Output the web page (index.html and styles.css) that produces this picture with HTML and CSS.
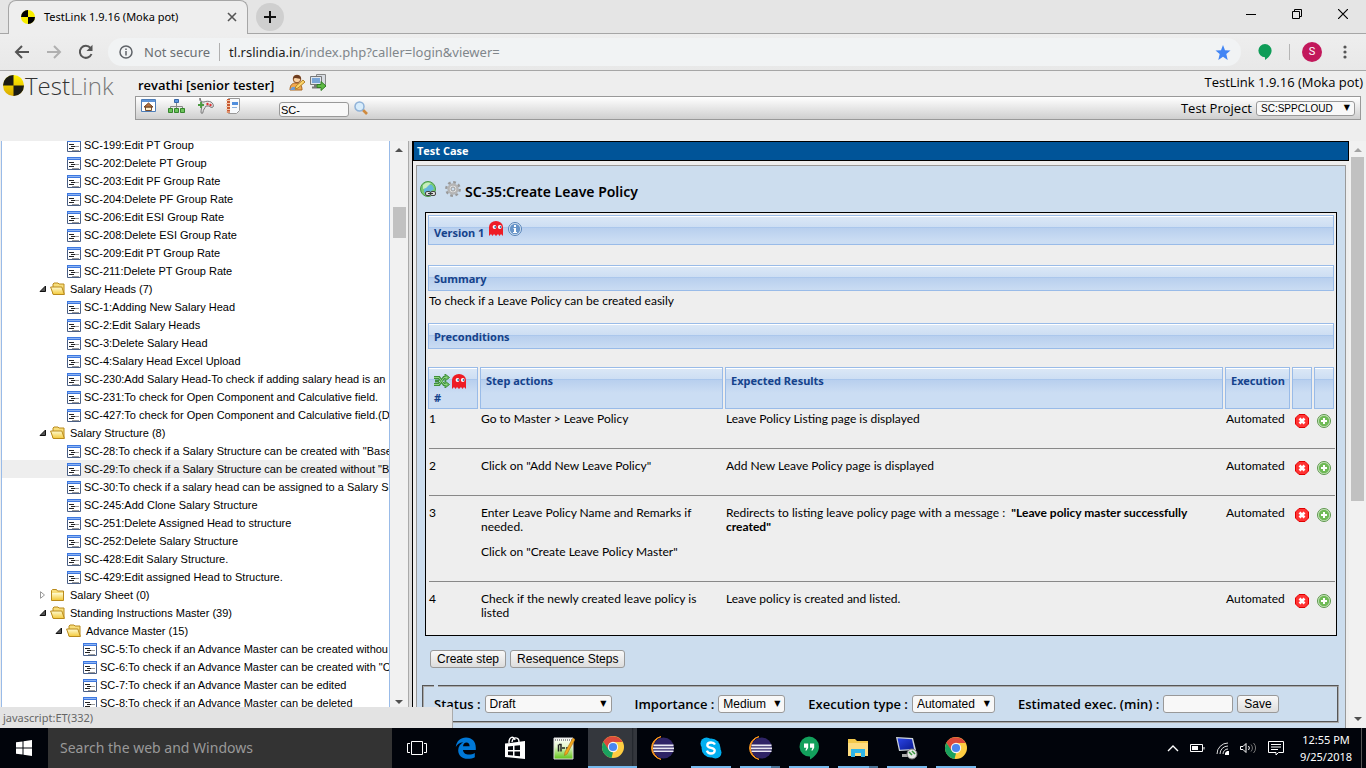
FILE: index.html
```html
<!DOCTYPE html>
<html lang="en">
<head>
<meta charset="utf-8">
<title>TestLink 1.9.16 (Moka pot)</title>
<link rel="stylesheet" href="styles.css">
</head>
<body>
<svg class="defs" aria-hidden="true">
  <defs>
    <linearGradient id="gFolder" x1="0" y1="0" x2="0" y2="1"><stop offset="0" stop-color="#fffbd0"/><stop offset="1" stop-color="#f3c93a"/></linearGradient>
    <linearGradient id="gYellow" x1="0" y1="0" x2="0" y2="1"><stop offset="0" stop-color="#fff200"/><stop offset="1" stop-color="#d9a800"/></linearGradient>
    <linearGradient id="gBlue" x1="0" y1="0" x2="1" y2="1"><stop offset="0" stop-color="#2b45e8"/><stop offset="1" stop-color="#0a1a90"/></linearGradient>
    <linearGradient id="gGreen" x1="0" y1="0" x2="0" y2="1"><stop offset="0" stop-color="#fff"/><stop offset=".4" stop-color="#e4f6cc"/><stop offset="1" stop-color="#5fc415"/></linearGradient>
    <symbol id="mark" viewBox="0 0 20 20"><circle cx="10" cy="10" r="10" fill="url(#gYellow)"/><path d="M10 10V0A10 10 0 0 0 0 10zM10 10v10a10 10 0 0 0 10-10z" fill="#1c1c14"/></symbol>
    <symbol id="case" viewBox="0 0 14 13"><path fill="#fff" stroke="#4a5f85" d="M.5.5h13v12H.5z"/><path fill="#3d78e0" d="M0 0h14v3H0z"/><path fill="#8db4f4" d="M1 1h12v1H1z"/><path fill="#222" d="M2 5h5v1H2zM2 9h5v1H2zM4 7h4v1H4z"/><path fill="#999" d="M8 7h4v1H8zM5 11h7v1H5z"/></symbol>
    <symbol id="open" viewBox="0 0 16 14"><path d="M3 4V2l1-1h4l1 1h5v10H3z" fill="#f7dd7a" stroke="#b98a1c"/><path d="M.6 5h11.2l2.6 7.5H3.2z" fill="url(#gFolder)" stroke="#b98a1c"/></symbol>
    <symbol id="closed" viewBox="0 0 16 14"><path d="M1.500 12.500v-10l1-1h4l1 1.500h6v9.500z" fill="#f7dd7a" stroke="#b98a1c"/><path d="M2 5h11v7H2z" fill="url(#gFolder)"/></symbol>
    <symbol id="down" viewBox="0 0 8 8"><path d="M1 6.500 6.500 1v5.500z" fill="#555" stroke="#111"/></symbol>
    <symbol id="side" viewBox="0 0 8 8"><path d="M1.500.7 5.500 4 1.500 7.300z" fill="#fff" stroke="#999"/></symbol>
    <symbol id="ghost" viewBox="0 0 14 15"><path d="M0 15V6a7 6 0 0 1 14 0v9l-2-2-1.500 2L9 13l-2 2-2-2-1.500 2L2 13z" fill="#ee1c25"/><circle cx="5.500" cy="6" r="1.900" fill="#fff"/><circle cx="10.800" cy="6" r="1.900" fill="#fff"/><path d="M5.500 5h1.500v2H5.500zM10.800 5h1.500v2h-1.500z" fill="#3b7fb0"/></symbol>
    <symbol id="info" viewBox="0 0 14 14"><circle cx="7" cy="7" r="6.500" fill="#dce9f7" stroke="#5580b5"/><circle cx="7" cy="7" r="5.200" fill="#6794c8"/><path d="M6 3h2v2H6zM5.500 6H8v4h1v1H5v-1h1V7h-.5z" fill="#fff"/></symbol>
    <symbol id="del" viewBox="0 0 14 14"><path d="M4 .5h6L13.500 4v6L10 13.500H4L.5 10V4z" fill="#f33" stroke="#e00000"/><path d="m4.500 4.500 5 5m0-5-5 5" stroke="#fff" stroke-width="2.600"/></symbol>
    <symbol id="add" viewBox="0 0 14 14"><circle cx="7" cy="7" r="6.500" fill="#cfe8c4" stroke="#5c964c"/><circle cx="7" cy="7" r="5.200" fill="#6fba56"/><path d="M6 4h2v2h2v2H8v2H6V8H4V6h2z" fill="#fff"/></symbol>
    <symbol id="shuffle" viewBox="0 0 16 14"><path d="M0 3.500h5l5 7h3M0 10.500h5l5-7h3M1 7h4" fill="none" stroke="#3f8f3c" stroke-width="3"/><path d="M11 0l4.500 3.500L11 7zM11 7l4.500 3.500L11 14z" fill="#6fbf62" stroke="#3f8f3c"/><path d="M0 3.500h5l5 7h3M0 10.500h5l5-7h3" fill="none" stroke="#8fd583"/></symbol>
    <symbol id="gear" viewBox="0 0 16 16"><circle cx="8" cy="8" r="6.700" fill="none" stroke="#999" stroke-width="2.400" stroke-dasharray="2.700 2.560"/><circle cx="8" cy="8" r="4.500" fill="#e2e2e2" stroke="#b5b5b5" stroke-width="2.400"/><circle cx="8" cy="8" r="2" fill="#cddeee" stroke="#999"/></symbol>
    <symbol id="globe" viewBox="0 0 16 16"><circle cx="8" cy="8" r="7.500" fill="#79cb73" stroke="#4a9a48"/><path d="M4 9c0-4 4-6 8-5l2 4-4 3-6 1z" fill="#63b5dc"/><path d="M3 4c3-3 5-3 8-2L6 7 3 8z" fill="#c7edbd"/><rect x="5.500" y="10.500" width="5" height="4" rx="1.500" fill="#ddd" stroke="#444"/><rect x="10.500" y="10.500" width="5" height="4" rx="1.500" fill="#ddd" stroke="#444"/><path d="M8 12.500h5" stroke="#333"/></symbol>
    <symbol id="chrome" viewBox="0 0 24 24"><circle cx="12" cy="12" r="11" fill="#ffcd41"/><path d="m12 12-5 3L2.400 6.600A11 11 0 0 1 21.600 7H12z" fill="#db4a3c"/><path d="M2.400 6.700 7.500 14.500 12 17.200 10.500 23A11 11 0 0 1 2.400 6.700z" fill="#1aa15f"/><circle cx="12" cy="12" r="5.200" fill="#f4f4f4"/><circle cx="12" cy="12" r="4.100" fill="#4a86f0"/></symbol>
    <symbol id="eclipse" viewBox="0 0 24 24"><path d="M11 .6A11.600 11.600 0 0 0 11 23.400 12 12 0 0 1 11 .6z" fill="#f7941e" stroke="#f7941e"/><circle cx="13.500" cy="12" r="10.500" fill="#2f2466"/><path d="M3.500 8.500h20v1.700h-20zM3 11.500h21v1.700H3zM3.500 14.500h20v1.500h-20z" fill="#eceaf4"/></symbol>
  </defs>
</svg>

<header class="browser">
  <div class="tabstrip">
    <div class="tab">
      <svg class="fav" width="16" height="16" viewBox="0 0 16 16"><circle cx="8" cy="8" r="7" fill="#f8ee00"/><path d="M8 8V1a7 7 0 0 0-7 7zM8 8v7a7 7 0 0 0 7-7z" fill="#000"/></svg>
      <span class="tab-title">TestLink 1.9.16 (Moka pot)</span>
      <button class="plain" aria-label="Close tab"><svg width="10" height="10"><path d="m1 1 8 8m0-8-8 8" stroke="#555" stroke-width="1.600"/></svg></button>
    </div>
    <button class="newtab" aria-label="New tab"><svg width="12" height="12"><path d="M0 6h12M6 0v12" stroke="#111" stroke-width="2"/></svg></button>
    <div class="winbtns">
      <button class="plain" aria-label="Minimize"><svg width="10" height="10"><path d="M0 5.500h10" stroke="#000"/></svg></button>
      <button class="plain" aria-label="Restore"><svg width="10" height="10"><path d="M.5 2.500h7v7h-7zM2.500 2.500v-2h7v7h-2" fill="none" stroke="#000"/></svg></button>
      <button class="plain" aria-label="Close"><svg width="10" height="10"><path d="m0 0 10 10m0-10L0 10" stroke="#000" stroke-width="1.200"/></svg></button>
    </div>
  </div>
  <div class="navbar">
    <button class="plain nav" aria-label="Back"><svg width="16" height="14"><path d="M15 7H2m6-6L2 7l6 6" fill="none" stroke="#555" stroke-width="2"/></svg></button>
    <button class="plain nav" aria-label="Forward"><svg width="16" height="14"><path d="M1 7h13M8 1l6 6-6 6" fill="none" stroke="#b0b0b0" stroke-width="2"/></svg></button>
    <button class="plain nav" aria-label="Reload"><svg width="16" height="16"><path d="M13.500 10A6 6 0 1 1 12.500 4" fill="none" stroke="#555" stroke-width="2"/><path d="M14.500.8V7H8.500z" fill="#555"/></svg></button>
    <div class="omni">
      <svg width="14" height="14"><circle cx="7" cy="7" r="6" fill="none" stroke="#5f6368" stroke-width="1.500"/><path d="M7 6v4.500M7 3.500V5" stroke="#5f6368" stroke-width="1.500"/></svg>
      <span class="insecure">Not secure</span>
      <span class="url"><b>tl.rslindia.in</b>/index.php?caller=login&amp;viewer=</span>
      <svg class="star" width="16" height="15" viewBox="0 0 16 15"><path d="m8 0 2 5.300 5.500.3-4.200 3.500L12.700 15 8 11.800 3.300 15l1.400-5.900L.5 5.600 6 5.300z" fill="#4285f4"/></svg>
    </div>
    <svg class="ext" width="14" height="17"><path d="M7 0a6.600 6.600 0 0 1 6.600 6.600c0 4-3 7-6.600 9.400v-2.800A6.600 6.600 0 0 1 7 0z" fill="#0f9d58"/></svg>
    <span class="vsep"></span>
    <span class="avatar">S</span>
    <svg class="menu" width="4" height="14" fill="#555"><circle cx="2" cy="2" r="1.600"/><circle cx="2" cy="7" r="1.600"/><circle cx="2" cy="12" r="1.600"/></svg>
  </div>
</header>

<div class="apphead">
  <a class="logo" href="#" aria-label="TestLink home"><svg width="21" height="21"><use href="#mark"/></svg><span>Test<i>Link</i></span></a>
  <div class="apphead-body">
    <div class="userline">
      <b>revathi [senior tester]</b>
      <svg width="17" height="17" viewBox="0 0 17 17"><path d="M1 16c0-5 2-7 6-7s6 2 6 7z" fill="#f0a850" stroke="#a8641c"/><path d="M3 13h3v3H1z" fill="#6a9bd8"/><circle cx="8" cy="5" r="3.800" fill="#fbd3a4" stroke="#8a4a1c"/><path d="M4 5c0-5.500 8-5.500 8 0-3 0-5-2-8 0z" fill="#6d3d20"/><path d="m7 12 7-6 2 2-7 6-3 1z" fill="#fbd56a" stroke="#b5832a"/></svg>
      <svg width="17" height="17" viewBox="0 0 17 17"><path d="M6.500.5h9v12h-9z" fill="#d8dce2" stroke="#888"/><path d="M.5 2.500h11v8H.5z" fill="#dfe6ee" stroke="#777"/><path d="M2 4h8v5H2z" fill="#7aa6d8"/><path d="M2 13.500h8M5 11v2" stroke="#777" stroke-width="2"/><path d="M7 10.500h4V7.500l5 4.500-5 4.500v-3H7z" fill="#5fb944" stroke="#317f24"/></svg>
      <span class="version">TestLink 1.9.16 (Moka pot)</span>
    </div>
    <div class="toolbar">
      <a href="#" aria-label="Home"><svg width="15" height="14"><path d="M.5.5h14v12H.5z" fill="#fff" stroke="#4d7db8"/><path d="M1 1h13v2H1z" fill="#5e94d8"/><path d="M4.500 11.500V8h6v3.500z" fill="#fbeecb" stroke="#7a5030"/><path d="m3 8 4.500-4L12 8z" fill="#b5713f" stroke="#6e4323"/></svg></a>
      <a href="#" aria-label="Specification"><svg width="17" height="14"><path d="M8.500 4v6M2.500 10V7.500h12V10" fill="none" stroke="#888"/><path d="M6.500.5h4v3h-4z" fill="#5b95e0" stroke="#3867a8"/><path d="M.5 9.500h4v4h-4zM6.500 9.500h4v4h-4zM12.500 9.500h4v4h-4z" fill="#6cc35a" stroke="#35852c"/></svg></a>
      <a href="#" aria-label="Execute"><svg width="17" height="16"><path d="M3 0c-1 3 1 4 4 4 2-1 5-1 7 0s3 4 2 5-3 0-4-1H9c-1 2-3 4-3 6s-2 2-2 0 1-6 1-8z" fill="#e4e4e4" stroke="#777"/><path d="M1 7h6M4 4v6" stroke="#4a9a40" stroke-width="1.800"/><circle cx="10.500" cy="6" r="1.200" fill="#d33"/><circle cx="13.500" cy="7" r="1.200" fill="#d33"/></svg></a>
      <a href="#" aria-label="Results"><svg width="15" height="16"><path d="M2.500.5h11v12l-3 3h-8z" fill="#f8fafd" stroke="#999"/><path d="M1 1h3v14H1z" fill="#c85a32"/><path d="M0 2.500h4M0 5.500h4M0 8.500h4M0 11.500h4M0 14h4" stroke="#f3c6a8"/><path d="M6 4h6v3H6z" fill="#4f8ede"/><path d="M6 9.500h5" stroke="#8bb0dc"/></svg></a>
      <label class="find"><input type="text" value="SC-" aria-label="Find test case"></label>
      <button class="plain" aria-label="Search"><svg width="14" height="14"><path d="m8 8 5 5" stroke="#cf8a3e" stroke-width="2.600"/><circle cx="5.500" cy="5.500" r="4.500" fill="#d7ecfb" stroke="#8fb2d8" stroke-width="1.500"/></svg></button>
      <label class="project">Test Project <span class="pick small"><select><option>SC:SPPCLOUD</option></select></span></label>
    </div>
  </div>
</div>

<main class="frames">
  <nav class="treeframe">
    <ul class="tree">
      <li><svg><use href="#case"/></svg><a href="#">SC-199:Edit PT Group</a></li>
      <li><svg><use href="#case"/></svg><a href="#">SC-202:Delete PT Group</a></li>
      <li><svg><use href="#case"/></svg><a href="#">SC-203:Edit PF Group Rate</a></li>
      <li><svg><use href="#case"/></svg><a href="#">SC-204:Delete PF Group Rate</a></li>
      <li><svg><use href="#case"/></svg><a href="#">SC-206:Edit ESI Group Rate</a></li>
      <li><svg><use href="#case"/></svg><a href="#">SC-208:Delete ESI Group Rate</a></li>
      <li><svg><use href="#case"/></svg><a href="#">SC-209:Edit PT Group Rate</a></li>
      <li><svg><use href="#case"/></svg><a href="#">SC-211:Delete PT Group Rate</a></li>
      <li class="folder"><svg class="arr"><use href="#down"/></svg><svg><use href="#open"/></svg><a href="#">Salary Heads (7)</a></li>
      <li><svg><use href="#case"/></svg><a href="#">SC-1:Adding New Salary Head</a></li>
      <li><svg><use href="#case"/></svg><a href="#">SC-2:Edit Salary Heads</a></li>
      <li><svg><use href="#case"/></svg><a href="#">SC-3:Delete Salary Head</a></li>
      <li><svg><use href="#case"/></svg><a href="#">SC-4:Salary Head Excel Upload</a></li>
      <li><svg><use href="#case"/></svg><a href="#">SC-230:Add Salary Head-To check if adding salary head is an</a></li>
      <li><svg><use href="#case"/></svg><a href="#">SC-231:To check for Open Component and Calculative field.</a></li>
      <li><svg><use href="#case"/></svg><a href="#">SC-427:To check for Open Component and Calculative field.(D</a></li>
      <li class="folder"><svg class="arr"><use href="#down"/></svg><svg><use href="#open"/></svg><a href="#">Salary Structure (8)</a></li>
      <li><svg><use href="#case"/></svg><a href="#">SC-28:To check if a Salary Structure can be created with "Base</a></li>
      <li class="hover"><svg><use href="#case"/></svg><a href="#">SC-29:To check if a Salary Structure can be created without "B</a></li>
      <li><svg><use href="#case"/></svg><a href="#">SC-30:To check if a salary head can be assigned to a Salary S</a></li>
      <li><svg><use href="#case"/></svg><a href="#">SC-245:Add Clone Salary Structure</a></li>
      <li><svg><use href="#case"/></svg><a href="#">SC-251:Delete Assigned Head to structure</a></li>
      <li><svg><use href="#case"/></svg><a href="#">SC-252:Delete Salary Structure</a></li>
      <li><svg><use href="#case"/></svg><a href="#">SC-428:Edit Salary Structure.</a></li>
      <li><svg><use href="#case"/></svg><a href="#">SC-429:Edit assigned Head to Structure.</a></li>
      <li class="folder"><svg class="arr"><use href="#side"/></svg><svg><use href="#closed"/></svg><a href="#">Salary Sheet (0)</a></li>
      <li class="folder"><svg class="arr"><use href="#down"/></svg><svg><use href="#open"/></svg><a href="#">Standing Instructions Master (39)</a></li>
      <li class="folder sub"><svg class="arr"><use href="#down"/></svg><svg><use href="#open"/></svg><a href="#">Advance Master (15)</a></li>
      <li class="sub"><svg><use href="#case"/></svg><a href="#">SC-5:To check if an Advance Master can be created withou</a></li>
      <li class="sub"><svg><use href="#case"/></svg><a href="#">SC-6:To check if an Advance Master can be created with "C</a></li>
      <li class="sub"><svg><use href="#case"/></svg><a href="#">SC-7:To check if an Advance Master can be edited</a></li>
      <li class="sub"><svg><use href="#case"/></svg><a href="#">SC-8:To check if an Advance Master can be deleted</a></li>
      <li class="sub"></li>
    </ul>
    <div class="scroll tree-scroll"><svg width="8" height="4"><path d="M0 4 4 0l4 4z" fill="#505050"/></svg><i></i><svg width="8" height="4"><path d="m0 0 4 4 4-4z" fill="#505050"/></svg></div>
  </nav>

  <section class="work">
    <h1>Test Case</h1>
    <div class="panel">
      <div class="title">
        <a href="#" aria-label="Direct link"><svg width="16" height="16"><use href="#globe"/></svg></a>
        <a href="#" aria-label="Actions"><svg width="16" height="16"><use href="#gear"/></svg></a>
        <h2>SC-35:Create Leave Policy</h2>
      </div>
      <div class="box">
        <div class="bar tall">Version 1 <svg width="14" height="15"><use href="#ghost"/></svg><svg width="14" height="14"><use href="#info"/></svg></div>
        <div class="bar summary">Summary</div>
        <p class="text">To check if a Leave Policy can be created easily</p>
        <div class="bar">Preconditions</div>
        <table>
          <colgroup><col class="c-num"><col class="c-act"><col><col class="c-exec"><col class="c-ico"><col class="c-ico"></colgroup>
          <thead><tr>
            <th><span class="hicons"><svg width="16" height="14"><use href="#shuffle"/></svg><svg width="14" height="15"><use href="#ghost"/></svg></span>#</th>
            <th>Step actions</th><th>Expected Results</th><th>Execution</th><th></th><th></th>
          </tr></thead>
          <tbody>
            <tr><td>1</td><td>Go to Master &gt; Leave Policy</td><td>Leave Policy Listing page is displayed</td><td>Automated</td><td><button class="plain" aria-label="Delete step"><svg width="14" height="14"><use href="#del"/></svg></button></td><td><button class="plain" aria-label="Insert step"><svg width="14" height="14"><use href="#add"/></svg></button></td></tr>
            <tr class="rule"><td colspan="6"><hr></td></tr>
            <tr><td>2</td><td>Click on "Add New Leave Policy"</td><td>Add New Leave Policy page is displayed</td><td>Automated</td><td><button class="plain" aria-label="Delete step"><svg width="14" height="14"><use href="#del"/></svg></button></td><td><button class="plain" aria-label="Insert step"><svg width="14" height="14"><use href="#add"/></svg></button></td></tr>
            <tr class="rule"><td colspan="6"><hr></td></tr>
            <tr><td>3</td><td><p>Enter Leave Policy Name and Remarks if<br>needed.</p><p>Click on "Create Leave Policy Master"</p></td><td>Redirects to listing leave policy page with a message :&nbsp; <b>"Leave policy master successfully<br>created"</b></td><td>Automated</td><td><button class="plain" aria-label="Delete step"><svg width="14" height="14"><use href="#del"/></svg></button></td><td><button class="plain" aria-label="Insert step"><svg width="14" height="14"><use href="#add"/></svg></button></td></tr>
            <tr class="rule"><td colspan="6"><hr></td></tr>
            <tr><td>4</td><td>Check if the newly created leave policy is<br>listed</td><td>Leave policy is created and listed.</td><td>Automated</td><td><button class="plain" aria-label="Delete step"><svg width="14" height="14"><use href="#del"/></svg></button></td><td><button class="plain" aria-label="Insert step"><svg width="14" height="14"><use href="#add"/></svg></button></td></tr>
          </tbody>
        </table>
      </div>
      <div class="actions"><button class="btn">Create step</button><button class="btn">Resequence Steps</button></div>
      <fieldset>
        <legend></legend>
        <div class="fields">
          <label>Status : <span class="pick"><select class="w-status"><option>Draft</option></select></span></label>
          <label>Importance : <span class="pick"><select class="w-imp"><option>Medium</option></select></span></label>
          <label>Execution type : <span class="pick"><select class="w-exec"><option>Automated</option></select></span></label>
          <label>Estimated exec. (min) : <input type="text" class="w-min"></label>
          <button class="btn save">Save</button>
        </div>
      </fieldset>
    </div>
  </section>
  <div class="scroll main-scroll"><svg width="8" height="4"><path d="M0 4 4 0l4 4z" fill="#a3a3a3"/></svg><i></i><svg width="8" height="4"><path d="m0 0 4 4 4-4z" fill="#505050"/></svg></div>
  <div class="status">javascript:ET(332)</div>
</main>

<footer class="taskbar">
  <button class="start" aria-label="Start"><svg width="16" height="16" fill="#fff"><path d="m0 2.300 6.500-.9v6.100H0zM7.500 1.200 16 0v7.500H7.500zM0 8.500h6.500v6.100L0 13.700zM7.500 8.500H16V16l-8.500-1.200z"/></svg></button>
  <input class="search" type="text" placeholder="Search the web and Windows" aria-label="Search the web and Windows">
  <button class="task" aria-label="Task view"><svg width="20" height="14" fill="none" stroke="#fff"><path d="M4.500.5h11v13h-11zM3 2.500H.5v9H3M17 2.500h2.500v9H17"/></svg></button>
  <button class="task" aria-label="Edge"><svg width="22" height="22" viewBox="0 0 22 22"><path d="M.8 10C1.600 4 5.500.6 11 .6c6 0 9.800 4.200 9.800 10.200V13H8c.2 3.200 2.800 4.600 5.800 4.600 2.300 0 4.300-.6 6-1.700v4.400c-2 1-4.300 1.500-7 1.500-5.800 0-9.600-3.300-9.600-8.600 0-3.600 2-6.500 5-8C4.500 5.600 2.200 7.200.8 10zM8 9.200h6.600C14.600 6.800 13.400 5.400 11.500 5.400 9.500 5.400 8.300 7 8 9.200z" fill="#0078d7"/></svg></button>
  <button class="task" aria-label="Store"><svg width="22" height="24"><path d="M5 7c0-7 5-7 6-3M8 6c1-6 7-5 7 0" fill="none" stroke="#fff" stroke-width="1.400"/><path d="M1 7.500 21 5v18L1 21z" fill="#fff"/><path d="m4 10.500 5-.5v4H4zM10.500 9.800 16 9.200V14h-5.500zM4 15.500h5v4L4 19zM10.500 15.500H16v4.800l-5.500-.6z" fill="#05070d"/></svg></button>
  <button class="task" aria-label="Notepad++"><svg width="22" height="24"><path d="M1 2h19v21H1z" fill="url(#gGreen)" stroke="#ddd"/><path d="M2 4h17" stroke="#999" stroke-width="2" stroke-dasharray="1 1"/><path d="M5.500 8.500v7M6 8.500h2v7M9 12h3M13 12h3" fill="none" stroke="#222" stroke-width="1.500"/><path d="m20 2 2 1.500L14 18l-2.500 1.500L12 16z" fill="#f4a81c" stroke="#a76b10" stroke-width=".6"/></svg></button>
  <button class="task active" aria-label="Chrome"><svg width="24" height="24"><use href="#chrome"/></svg></button>
  <button class="task" aria-label="Eclipse"><svg width="24" height="24"><use href="#eclipse"/></svg></button>
  <button class="task on" aria-label="Skype"><svg width="22" height="22" viewBox="0 0 22 22"><circle cx="11" cy="11" r="9.500" fill="#00aff0"/><circle cx="6.500" cy="6.500" r="6" fill="#00aff0"/><circle cx="15.500" cy="15.500" r="6" fill="#00aff0"/><path d="M15 7.500C14 5.700 12.700 5.500 11 5.500c-2.200 0-3.700 1-3.700 2.700 0 3.700 7.400 1.700 7.400 5.300 0 2-1.700 3-3.800 3-2 0-3.400-.8-4-2.800" fill="none" stroke="#fff" stroke-width="2.300"/></svg></button>
  <button class="task on multi" aria-label="Eclipse workspace"><svg width="24" height="24"><use href="#eclipse"/></svg></button>
  <button class="task on" aria-label="Hangouts"><svg width="22" height="24"><path d="M11 .5a10 10 0 0 1 10 10c0 6-4.500 10.500-9 13v-3A10 10 0 1 1 11 .5z" fill="#12a05c"/><path d="M6 7.500h4.200v4.200L8.600 14.500H7.300l1.200-2.800H6zM12 7.500h4.200v4.200l-1.600 2.800h-1.300l1.200-2.800H12z" fill="#fff"/></svg></button>
  <button class="task on multi" aria-label="File Explorer"><svg width="22" height="20"><path d="M1 1h7l2 2h11v15H1z" fill="#f3c84b"/><path d="M1 5h20v13H1z" fill="#fddc80"/><path d="M4 19v-8h14v8h-4v-4H8v4z" fill="#2fb5e8"/></svg></button>
  <button class="task on" aria-label="Remote session"><svg width="24" height="24"><path d="m1 1 17 1 3 12-17 1z" fill="#cfd6dc"/><path d="m2.500 2.300 14.500 1L19 13 5 13.700z" fill="url(#gBlue)"/><path d="M7 18h12v3H7z" fill="#aaa"/><circle cx="17" cy="18" r="5" fill="#e6e8e6" stroke="#777"/><path d="m14 16 3 3m0-4 3 3" stroke="#3a9640" stroke-width="1.500"/></svg></button>
  <button class="task on" aria-label="Chrome window"><svg width="24" height="24"><use href="#chrome"/></svg></button>
  <div class="tray">
    <svg width="12" height="8"><path d="m1 7 5-5 5 5" fill="none" stroke="#fff" stroke-width="1.400"/></svg>
    <svg width="15" height="10"><path d="M.5 1.500h12v7H.5zM14 4v2.500" fill="none" stroke="#fff"/><path d="M2 3h6v4H2z" fill="#fff"/></svg>
    <svg width="13" height="13" fill="none" stroke="#ddd"><path d="M1 12A11 11 0 0 1 12 1M4 12a8 8 0 0 1 8-8M7 12a5 5 0 0 1 5-5"/><path d="M9 13v-2l2-2h2v4z" fill="#fff" stroke="none"/></svg>
    <svg width="17" height="12" fill="none" stroke="#fff"><path d="M.5 4.500h2.500l3-3v9l-3-3H.5zM8.500 4a3 3 0 0 1 0 4"/><path d="M11 2.500a5 5 0 0 1 0 7M13.500 1a7 7 0 0 1 0 10" stroke="#777"/></svg>
    <svg width="16" height="16" fill="none" stroke="#fff"><path d="M.5 1.500h15v11h-5L8 15v-2.500H.5zM3 4.500h10M3 7h10M3 9.500h7"/></svg>
    <div class="clock"><span>12:55 PM</span><span>9/25/2018</span></div>
  </div>
</footer>
</body>
</html>
```
FILE: styles.css
```css
* { box-sizing: border-box; }
html, body { height: 100%; }
body {
  margin: 0;
  display: flex;
  flex-direction: column;
  overflow: hidden;
  background: #eee;
  color: #000;
  font: 12px/14px "Trebuchet MS", Lato, sans-serif;
}
svg { display: block; flex: none; }
a { color: inherit; text-decoration: none; }
p, h1, h2, ul { margin: 0; padding: 0; }
.defs { position: absolute; width: 0; height: 0; }
.plain { border: 0; padding: 0; background: none; display: block; }

/* Browser chrome */
.browser { flex: none; font: 11px/14px "Segoe UI", "Noto Sans", sans-serif; border-bottom: 1px solid #a6a6a6; }
.tabstrip { display: flex; align-items: center; height: 34px; background: #e5e5e5; border-bottom: 1px solid #a6a6a6; padding-left: 8px; }
.tab {
  display: flex; align-items: center; align-self: stretch; gap: 8px;
  width: 240px; margin-bottom: -1px; padding: 0 10px 2px 11px;
  background: #eee; border: 1px solid #a6a6a6; border-bottom: 0; border-radius: 8px 8px 0 0;
}
.tab-title { flex: 1; white-space: nowrap; }
.newtab { display: grid; place-items: center; width: 28px; height: 28px; margin-left: 8px; padding: 0; border: 0; border-radius: 50%; background: #cfcfcf; }
.winbtns { display: flex; gap: 36px; margin-left: auto; padding: 0 18px 6px 0; }
.navbar { display: flex; align-items: center; height: 36px; background: linear-gradient(#eee, #e8e8e8); padding-left: 14px; }
.nav { width: 16px; margin-right: 16px; }
.omni { display: flex; align-items: center; flex: 1; height: 28px; margin-left: -2px; padding: 0 10px 0 11px; border-radius: 14px; background: #f1f3f4; font-size: 13px; line-height: 18px; color: #80868b; }
.insecure { margin-left: 11px; padding-right: 9px; border-right: 1px solid #b0b0b0; color: #6b6f73; }
.url { margin-left: 9px; }
.url b { font-weight: 400; color: #222; }
.star { margin-left: auto; }
.ext { margin: 0 17px; }
.vsep { width: 1px; height: 16px; background: #b5b5b5; }
.avatar { display: grid; place-items: center; width: 20px; height: 20px; margin-left: 12px; border-radius: 50%; background: #c2185b; color: #fff; font-family: Roboto, sans-serif; }
.menu { margin: 0 19px 0 21px; }

/* Application header */
.apphead { display: flex; flex: none; height: 70px; font-family: "Trebuchet MS", "Open Sans", sans-serif; }
.logo { display: flex; align-items: center; gap: 1px; width: 135px; height: 29px; padding-left: 3px; font: 300 24px/28px "Open Sans", sans-serif; color: #333; }
.logo i { font-style: normal; color: #777; }
.apphead-body { flex: 1; padding-right: 5px; }
.userline { display: flex; align-items: center; gap: 4px; height: 25px; padding: 0 0 2px 3px; margin-right: -2px; font-size: 13px; line-height: 18px; }
.userline b { font-weight: 600; padding: 4px 11px 0 0; }
.version { margin: -2px 0 0 auto; }
.toolbar { display: flex; align-items: center; height: 24px; border: 1px solid #999; background: linear-gradient(#fff, #cfcfcf); padding: 0 5px; }
.toolbar a { margin: -4px 12px 0 0; }
.find { margin: 3px 5px 0 26px; }
input[type="text"] { border: 1px solid #999; border-radius: 3px; background: #f8f8f8; font: 11px/13px Arial, "Liberation Sans", sans-serif; }
.find input { display: block; width: 70px; height: 15px; padding: 0 1px; }
.project { display: flex; align-items: center; gap: 4px; margin-left: auto; font-size: 13px; }

.pick { position: relative; display: inline-block; }
.pick::after { content: "▼"; position: absolute; right: 5px; top: 0; font: 8px/18px "DejaVu Sans", sans-serif; pointer-events: none; }
.pick select { display: block; appearance: none; height: 18px; padding: 0 4px; border: 1px solid #999; border-radius: 3px; background: #f8f8f8; color: #000; font: 12px/16px Arial, "Liberation Sans", sans-serif; }
.pick.small::after { line-height: 14px; }
.pick.small select { width: 99px; height: 15px; font-size: 10px; line-height: 13px; }

/* Frames */
.frames { position: relative; display: flex; flex: 1; min-height: 0; overflow: hidden; }
.treeframe { display: flex; flex: 0 0 413px; min-width: 0; border-left: 1px solid #eee; border-right: 1px solid #000; background: #ddd; }
.tree { flex: 1; min-width: 0; overflow: hidden; margin: 0; padding: 0; list-style: none; background: #fff; border: solid #99bbe8; border-width: 0 1px; font: 11px/18px Arial, "Liberation Sans", sans-serif; }
.tree li { display: flex; align-items: center; gap: 3px; height: 18px; padding-left: 65px; white-space: nowrap; }
.tree li:first-child { margin-top: -5px; }
.tree li.folder { gap: 4px; padding-left: 37px; }
.tree li.sub { padding-left: 81px; }
.tree li.folder.sub { padding-left: 53px; }
.tree li.hover { background: #eee; }
.tree svg { width: 14px; height: 13px; }
.tree .folder svg { width: 16px; height: 14px; }
.tree .folder .arr { width: 8px; height: 8px; margin-right: -1px; }
.scroll { display: flex; flex-direction: column; align-items: center; justify-content: space-between; flex: none; width: 17px; padding: 7px 0; background: #f1f1f1; }
.scroll i { width: 13px; background: #c1c1c1; margin-bottom: auto; }
.tree-scroll { width: 19px; margin-right: 3px; padding-bottom: 24px; border-right: 1px solid #aaa; }
.tree-scroll i { height: 31px; margin-top: 55px; }
.main-scroll i { height: 344px; margin-top: 5px; }

.work { flex: 1; min-width: 0; overflow: hidden; }
h1 { height: 20px; padding: 0 3px; border: 1px solid #000; background: #005498; color: #fff; font: 700 11px/18px "Trebuchet MS", "Open Sans", sans-serif; }
.panel { height: 620px; margin: 4px 3px 0; padding: 13px 6px 0 5px; border: 1px solid #999; background: #cde; }
.title { display: flex; gap: 9px; margin-left: -2px; height: 33px; align-items: flex-start; padding-top: 2px; }
.title h2 { margin-left: -5px; padding-top: 2px; font: 600 14px/18px "Trebuchet MS", "Noto Sans", sans-serif; }
.box { margin: 0 2px 0 3px; padding: 2px 0 0; border: 1px solid #000; background: #eee; }
.bar, th { border: 1px solid #99bbe8; background: linear-gradient(#fff 0, #fff 1px, #dae7f6 1px, #cddef3 11px, #abc7ec 11px, #abc7ec 12px, #b8cfee 12px, #cbddf3 25px, #cbddf3); color: #15428b; font: 700 11px/17px Tahoma, "Noto Sans", sans-serif; text-align: left; }
.bar { display: flex; align-items: center; gap: 5px; height: 26px; margin: 0 2px; padding: 0 5px; }
.bar.tall { height: 30px; padding-top: 4px; }
.bar.tall svg { margin-top: -7px; }
.bar.summary { margin-top: 20px; }
.text { padding: 3px; height: 32px; }
table { width: 100%; margin-top: 16px; border-collapse: separate; border-spacing: 2px; table-layout: fixed; }
.c-num { width: 50px; }
.c-act { width: 243px; }
.c-exec { width: 65px; }
.c-ico { width: 20px; }
th { height: 42px; padding: 4px 5px 0; vertical-align: top; }
.hicons { display: flex; gap: 2px; height: 17px; padding-top: 2px; }
td { padding: 1px 1px 13px; vertical-align: top; }
td button { margin: 2px; }
td p + p { margin-top: 11px; }
td b { font-weight: 700; }
td:nth-child(n+5) { padding-bottom: 0; }
.rule td { padding: 7px 0 7px 1px; }
hr { margin: 0 -1px 0 0; border: 0; height: 1px; background: #888; }
.actions { display: flex; gap: 4px; margin: 14px 0 17px 8px; }
.btn { height: 18px; padding: 0 6px; border: 1px solid #999; border-radius: 3px; background: linear-gradient(#f9f9f9, #ddd); color: #000; font: 12px/16px Arial, "Liberation Sans", sans-serif; }
fieldset { margin: 0; padding: 0 10px; height: 38px; border: 2px groove #aaa; }
legend { width: 4px; height: 2px; padding: 0; }
.fields { display: flex; align-items: center; height: 33px; gap: 23px; font: 600 13px/18px "Trebuchet MS", "Open Sans", sans-serif; }
.fields label { display: flex; align-items: center; gap: 4px; white-space: nowrap; }
.w-status { width: 127px; }
.w-imp { width: 67px; }
.w-exec { width: 83px; }
.w-min { width: 70px; height: 18px; }
.save { margin-left: -19px; }
.status { position: absolute; left: 0; bottom: 0; width: 453px; height: 21px; padding: 0 3px; background: #e3e3e3; border-right: 1px solid #aaa; color: #666; font: 11px/21px "Segoe UI", "Noto Sans", sans-serif; }

/* Taskbar */
.taskbar { display: flex; flex: none; height: 40px; background: #01040b; }
.start { width: 48px; border: 0; background: none; display: grid; place-items: center; padding: 0; }
.taskbar .search { width: 344px; border: 0; border-radius: 0; background: #333; color: #ccc; padding: 0 12px; font: 14px/20px "Segoe UI", "Noto Sans", sans-serif; }
.search::placeholder { color: #999; opacity: 1; }
.task { position: relative; width: 49px; border: 0; padding: 0; background: none; display: grid; place-items: center; }
.task.active { background: linear-gradient(90deg, #34373d 44px, #1f2329 44px, #34373d 46px); border-bottom: 2px solid #76b9ed; }
.task.on::after { content: ""; position: absolute; left: 5px; right: 4px; bottom: 0; height: 2px; background: #76b9ed; }
.task.multi::after { background: linear-gradient(90deg, #76b9ed 31px, #4a7396 31px); }
.tray { display: flex; align-items: center; gap: 11px; margin-left: auto; padding-right: 4px; border-right: 1px solid #555; margin-right: 4px; }
.clock { display: flex; flex-direction: column; align-items: center; width: 62px; color: #fff; font: 11px/17px "Segoe UI", "Noto Sans", sans-serif; }
```
